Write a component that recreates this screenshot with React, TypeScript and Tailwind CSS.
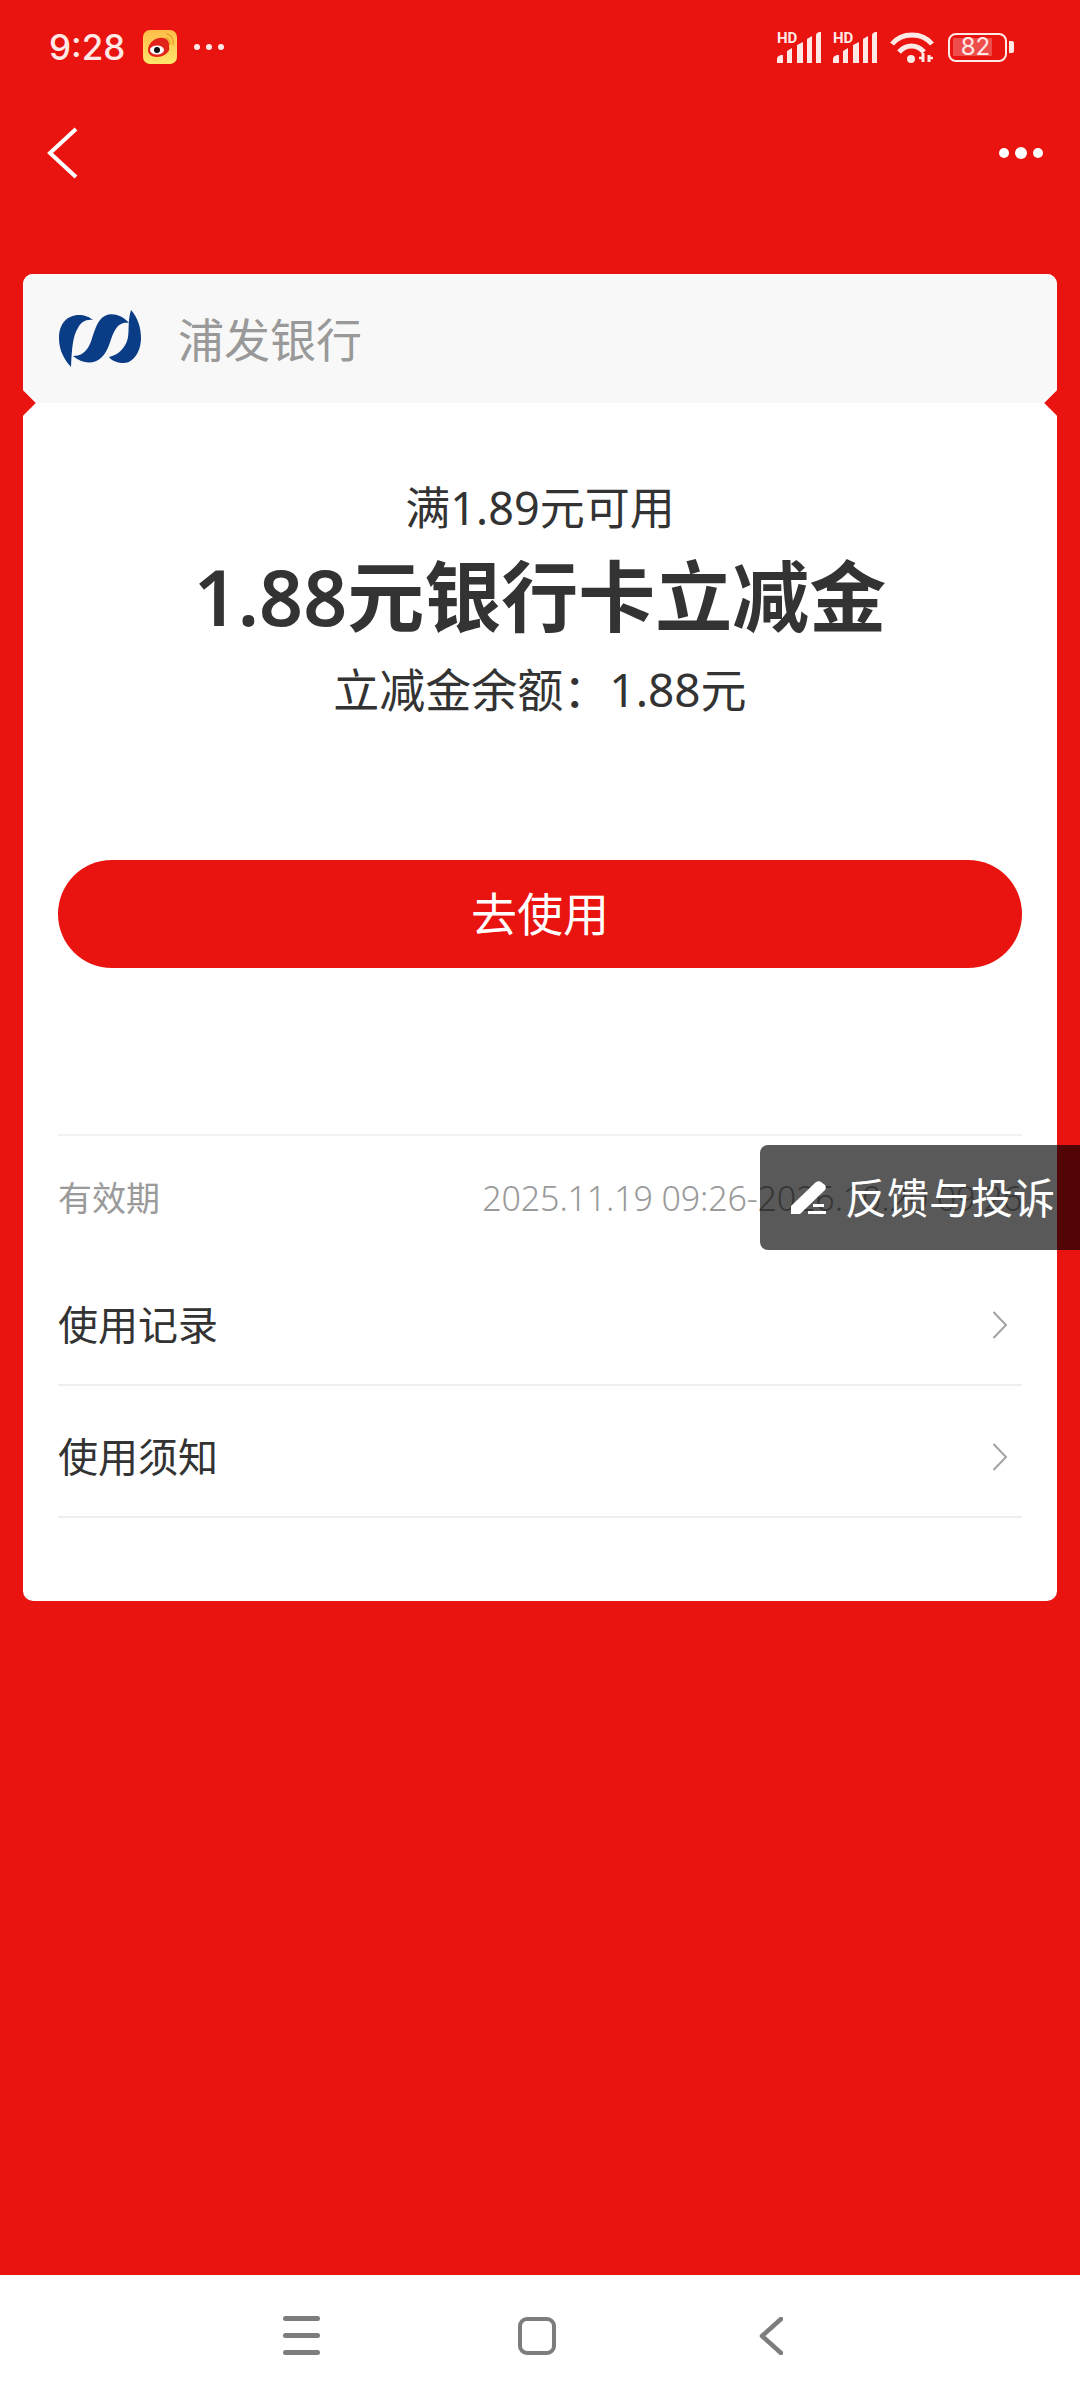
const SignalIcon = () => (
  <svg width="46" height="31" viewBox="0 0 46 31" fill="#ffe9e7">
    <text x="1" y="11" fontSize="15" fontWeight="700" fontFamily="Roboto, sans-serif">HD</text>
    <path d="M1 31v-4q0-3 4-4h2v8zM11 31V19l5-3v15zM21 31V13l6-3v21zM31 31V7l5-3v27zM40 31V3q0-2 3-3h2v31z" />
  </svg>
);

const WifiIcon = () => (
  <svg width="44" height="32" viewBox="0 0 44 32" fill="none" stroke="#ffe9e7" strokeWidth="5">
    <path d="M2 13C12 1 32 1 42 13" />
    <path d="M9 21c7-8 18-8 25 0" />
    <circle cx="21" cy="28" r="4" fill="#ffe9e7" stroke="none" />
    <path d="M33 22v9M39 24v7" strokeWidth="3" />
    <path d="M29 27h5M38 27h5" strokeWidth="2.5" />
  </svg>
);

const WeiboIcon = () => (
  <svg width="34" height="34" viewBox="0 0 34 34">
    <defs>
      <linearGradient id="wb" x1="0" y1="0" x2="0" y2="1">
        <stop offset="0" stopColor="#ffbe49" />
        <stop offset="1" stopColor="#ffe56c" />
      </linearGradient>
    </defs>
    <rect width="34" height="34" rx="7" fill="url(#wb)" />
    <path d="M5 20c0-6 6-12 12-12 6-1 10 3 9 9 2 5-6 10-12 10-6 0-9-3-9-7z" fill="#e2231a" />
    <ellipse cx="14" cy="20" rx="7" ry="4.6" fill="#fff" />
    <circle cx="14" cy="20" r="3" fill="#111" />
    <path d="M22 8c4 0 5 3 5 7M23 4c5 0 8 5 7 11" fill="none" stroke="#e8a62c" strokeWidth="1.6" />
  </svg>
);

const SpdLogo = () => (
  <svg width="83" height="58" viewBox="0 0 83 58" fill="#0b3d86">
    <path d="M12 57C2 46 0 36 0 28 0 14 8 5 20 5c5 0 11 2 14 5-7-1-12 2-15 8-5 8-6 18-7 39z" />
    <path d="M14 46c7 0 12-3 16-10 4-8 5-18 11-26 6-8 19-8 29 3-6-1-11 1-15 9-4 8-5 18-12 25-8 8-20 7-29-1z" />
    <path d="M72 0c7 8 10 18 10 28 0 14-8 25-17 25-6 0-12-2-15-6 9-2 15-8 18-16 3-8 0-18 4-31z" />
  </svg>
);

const PencilIcon = () => (
  <svg width="35" height="33" viewBox="0 0 35 33" fill="#fff">
    <path d="M0 33v-8L25 1c2-1 4-1 5 0l4 3c1 1 1 4 0 5L9 33z" />
    <rect x="22" y="23" width="11" height="3" />
    <rect x="17" y="30" width="18" height="3" />
  </svg>
);

const Chevron = () => (
  <svg width="16" height="28" viewBox="0 0 16 28" fill="none" stroke="#a3a3a3" strokeWidth="2">
    <path d="M1.5 1L14 14 1.5 27" />
  </svg>
);

const rows = ["使用记录", "使用须知"];

export default function App() {
  return (
    <div className="relative flex h-[2400px] w-[1080px] flex-col overflow-hidden bg-[#e9130f] font-['Noto_Sans','Noto_Sans_CJK_SC',sans-serif]">
      {/* status bar */}
      <div className="flex h-[94px] items-center pl-[49px] pr-[66px] text-[#ffe9e7]">
        <span className="w-[76px] font-['Inter',sans-serif] text-[35px] leading-none font-medium">9:28</span>
        <div className="ml-[18px]"><WeiboIcon /></div>
        <div className="ml-[17px] flex gap-[6px]">
          <span className="h-[6px] w-[6px] rounded-full bg-[#ffe9e7]" />
          <span className="h-[6px] w-[6px] rounded-full bg-[#ffe9e7]" />
          <span className="h-[6px] w-[6px] rounded-full bg-[#ffe9e7]" />
        </div>
        <div className="ml-auto flex items-center">
          <SignalIcon />
          <div className="ml-[10px]"><SignalIcon /></div>
          <div className="ml-[12px]"><WifiIcon /></div>
          <div className="ml-[14px] flex h-[29px] w-[59px] items-center rounded-[8px] border-[2.5px] border-[#ffe9e7] pl-[3px]">
            <div className="relative flex h-[18px] w-[39px] items-center justify-center bg-white/25 font-['Inter',sans-serif] text-[24px] leading-none">
              <span className="pl-[6px]">82</span>
            </div>
          </div>
          <span className="ml-[2px] h-[12px] w-[5px] rounded-r-[2px] bg-[#ffe9e7]" />
        </div>
      </div>

      {/* title bar */}
      <div className="flex h-[118px] items-center justify-between pl-[46px] pr-[37px]">
        <svg width="32" height="52" viewBox="0 0 32 52" fill="none" stroke="#fff" strokeWidth="4">
          <path d="M30 2L4 26l26 24" />
        </svg>
        <div className="flex items-center gap-[6px]">
          <span className="h-[10px] w-[10px] rounded-full bg-white" />
          <span className="h-[12px] w-[12px] rounded-full bg-white" />
          <span className="h-[10px] w-[10px] rounded-full bg-white" />
        </div>
      </div>

      {/* card */}
      <div className="relative mx-[23px] mt-[62px] h-[1327px] overflow-hidden rounded-[10px] bg-white">
        <div className="flex h-[129px] items-center bg-[#f8f8f8] pl-[36px]">
          <SpdLogo />
          <span className="ml-[36px] text-[46px] leading-none text-[#999999]">浦发银行</span>
        </div>
        <span className="absolute left-[-9px] top-[120px] h-[18px] w-[18px] rotate-45 bg-[#e9130f]" />
        <span className="absolute right-[-9px] top-[120px] h-[18px] w-[18px] rotate-45 bg-[#e9130f]" />

        <div className="flex flex-col px-[35px]">
          <p className="mt-[75px] text-center text-[45px] leading-[60px] text-[#333333]">满1.89元可用</p>
          <p className="mt-[14px] text-center text-[77px] leading-[90px] font-semibold text-[#333333]">1.88元银行卡立减金</p>
          <p className="mt-[17px] text-center text-[46px] leading-[60px] text-[#333333]">立减金余额：1.88元</p>
          <button className="mt-[141px] h-[108px] rounded-full bg-[#e9130f] pb-[2px] text-[46px] text-white">去使用</button>
          <div className="mt-[166px] h-[2px] bg-[#f1f1f1]" />
          <div className="flex h-[118px] items-center justify-between pt-[6px] text-[#9a9a9a]">
            <span className="text-[34px] leading-none">有效期</span>
            <span className="text-[34px] leading-none font-light tracking-[-0.14px]">2025.11.19 09:26-2026.10.20 09:26</span>
          </div>
          {rows.map((label) => (
            <div key={label} className="flex h-[132px] items-center justify-between border-b-2 border-[#eeeeee] pr-[14px] pt-[12px]">
              <span className="text-[40px] leading-none text-[#333333]">{label}</span>
              <Chevron />
            </div>
          ))}
        </div>
      </div>

      {/* floating feedback tab */}
      <div className="absolute left-[760px] top-[1145px] flex h-[105px] w-[320px] items-center rounded-l-[8px] bg-black/65 pl-[31px]">
        <PencilIcon />
        <span className="ml-[19px] text-[42px] leading-none text-white">反馈与投诉</span>
      </div>

      {/* nav bar */}
      <div className="mt-auto flex h-[125px] items-center bg-white pb-[4px] pl-[283px]">
        <div className="flex w-[37px] flex-col gap-[12px]">
          <span className="h-[5px] rounded-full bg-[#7d7d7d]" />
          <span className="h-[5px] rounded-full bg-[#7d7d7d]" />
          <span className="h-[5px] rounded-full bg-[#7d7d7d]" />
        </div>
        <span className="ml-[198px] h-[38px] w-[38px] rounded-[9px] border-[4px] border-[#7d7d7d]" />
        <svg className="ml-[203px]" width="24" height="38" viewBox="0 0 24 38" fill="none" stroke="#7d7d7d" strokeWidth="4.5" strokeLinecap="round" strokeLinejoin="round">
          <path d="M22 2L3 19l19 17" />
        </svg>
      </div>
    </div>
  );
}
